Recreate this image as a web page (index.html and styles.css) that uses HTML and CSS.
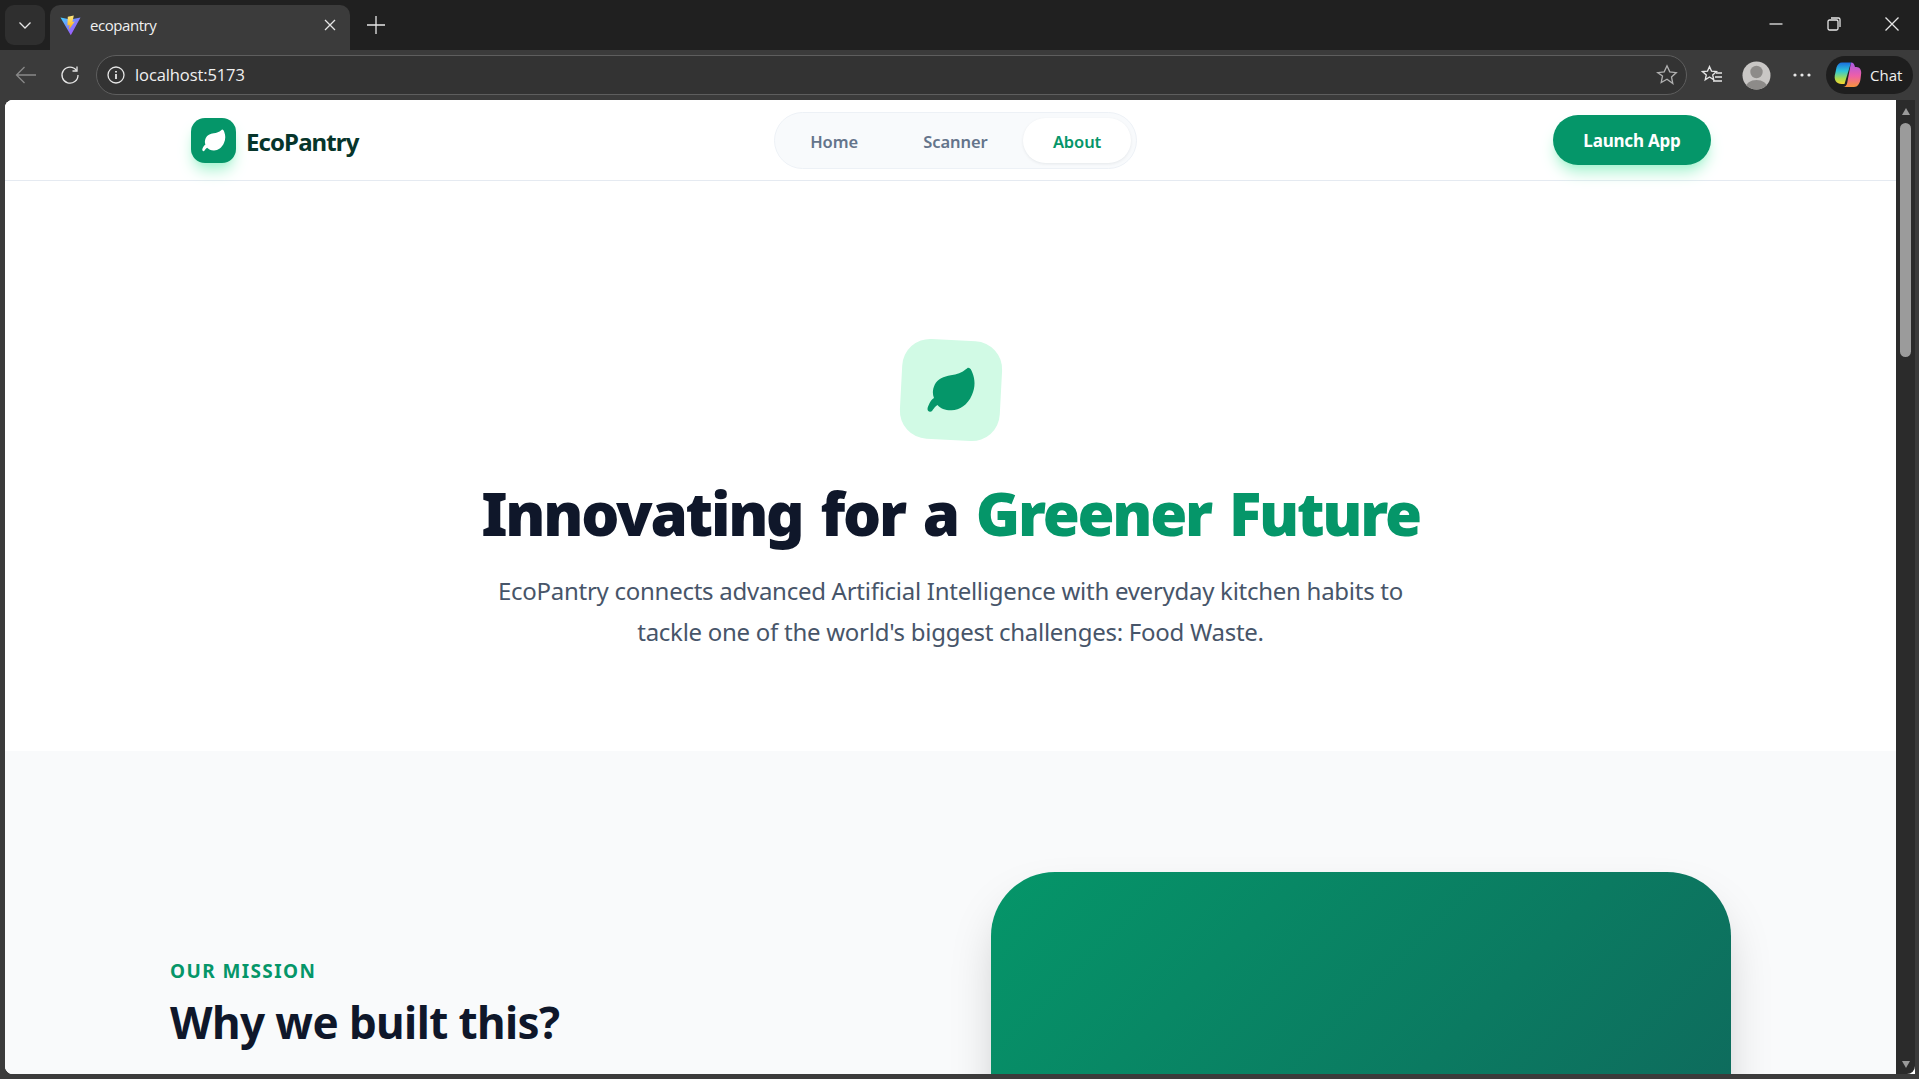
FILE: index.html
```html
<!DOCTYPE html>
<html lang="en">
<head>
<meta charset="utf-8">
<title>ecopantry</title>
<link rel="stylesheet" href="styles.css">
</head>
<body>
<div class="browser">
  <div class="tabstrip">
    <div class="tab-menu"><svg width="16" height="16" viewBox="0 0 16 16"><path d="M2.500 5.500 8 11l5.500-5.500" class="st"/></svg></div>
    <div class="tab">
      <svg class="favicon" width="21" height="21" viewBox="0 0 21 21">
        <defs>
          <linearGradient id="va" x1="0" y1="0" x2="1" y2="1"><stop offset="0" stop-color="#41d1ff"/><stop offset="1" stop-color="#bd34fe"/></linearGradient>
          <linearGradient id="vb" x1="0" y1="0" x2="0" y2="1"><stop offset="0" stop-color="#ffea83"/><stop offset="1" stop-color="#ffa800"/></linearGradient>
        </defs>
        <path d="M0.500 2.500 10.500 4.500 20.500 2.500 10.800 20.200Z" fill="url(#va)"/>
        <path d="M13.800 0.500 7.800 1.800 7.400 10.400 9.600 10 9 14.600 14.800 6.600 12.400 7Z" fill="url(#vb)"/>
      </svg>
      <span class="tab-title">ecopantry</span>
      <svg class="tab-close" width="12" height="12" viewBox="0 0 12 12"><path d="M1 1l10 10M11 1 1 11" class="st"/></svg>
    </div>
    <svg class="newtab" width="20" height="20" viewBox="0 0 20 20"><path d="M10 1v18M1 10h18" class="st"/></svg>
    <div class="window-controls">
      <svg width="14" height="14" viewBox="0 0 14 14"><path d="M0.500 7h13" class="st"/></svg>
      <svg width="14" height="14" viewBox="0 0 14 14"><rect x="1" y="3" width="10" height="10" rx="1.500" class="st"/><path d="M4 1h7.500A1.500 1.500 0 0 1 13 2.500V10" class="st"/></svg>
      <svg width="14" height="14" viewBox="0 0 14 14"><path d="M0.500 0.500l13 13M13.500 0.500l-13 13" class="st"/></svg>
    </div>
  </div>
  <div class="toolbar">
    <svg class="tool-back" width="22" height="18" viewBox="0 0 22 18"><path d="M21 9H1.500M9.500 1 1.500 9l8 8" class="st"/></svg>
    <svg class="tool-reload" width="20" height="20" viewBox="0 0 20 20"><path d="M16.500 5.500A8 8 0 1 0 18 10" class="st"/><path d="M17 1.500v4.500h-4.500" class="st"/></svg>
    <div class="omnibox">
      <svg width="18" height="18" viewBox="0 0 18 18"><circle cx="9" cy="9" r="8" class="st"/><path d="M9 8v5M9 5v1.500" class="st st-b"/></svg>
      <span class="url">localhost:5173</span>
      <svg class="omni-star" width="22" height="22" viewBox="0 0 22 22"><path d="M11 1.800l2.800 6 6.500.8-4.800 4.400 1.300 6.500L11 15.300l-5.800 3.200 1.300-6.500L1.700 8.600l6.500-.8z" class="st"/></svg>
    </div>
    <svg class="tool-fav" width="22" height="20" viewBox="0 0 22 20"><path d="M8.500 1.500l2 4.600 5 .5-3.800 3.300 1.100 5L8.500 12l-4.300 2.900 1.100-5L1.500 6.600l5-.5z" class="st"/><path d="M15 8h6M14 12h7M12 16h9" class="st"/></svg>
    <svg class="tool-avatar" width="29" height="29" viewBox="0 0 29 29"><defs><clipPath id="av"><circle cx="14.500" cy="14.500" r="14"/></clipPath></defs><circle cx="14.500" cy="14.500" r="14" fill="#c9c7c5"/><g clip-path="url(#av)" fill="#8d8b89"><circle cx="14.500" cy="11" r="6.200"/><ellipse cx="14.500" cy="27" rx="11" ry="8"/></g></svg>
    <svg class="tool-more" width="18" height="4" viewBox="0 0 18 4"><circle cx="2" cy="2" r="1.600" fill="#e8e8e8"/><circle cx="9" cy="2" r="1.600" fill="#e8e8e8"/><circle cx="16" cy="2" r="1.600" fill="#e8e8e8"/></svg>
    <div class="chat">
      <svg width="28" height="28" viewBox="0 0 28 28">
        <defs>
          <linearGradient id="ca" x1="0.300" y1="0" x2="0.300" y2="1"><stop offset="0" stop-color="#1a6fe0"/><stop offset=".4" stop-color="#2fc6d8"/><stop offset=".75" stop-color="#a8dc50"/><stop offset="1" stop-color="#f7d52e"/></linearGradient>
          <linearGradient id="cb" x1="0.500" y1="0" x2="0.500" y2="1"><stop offset="0" stop-color="#a85ae6"/><stop offset=".55" stop-color="#ee5fa8"/><stop offset="1" stop-color="#f7943c"/></linearGradient>
        </defs>
        <path d="M8 1.500h9L10.500 23H7.500C2.500 23 0 19 .8 14.500L2.500 6.500C3.200 3.500 5.500 1.500 8 1.500Z" fill="url(#ca)"/>
        <path d="M17 1.500c2.200 0 3.300 1.200 4 4.500h1.500c3 .3 5 2.500 4.700 6l-.7 6c-.6 4.500-3 8-6.500 8H9c2.200 0 3.500-1.500 4.200-4Z" fill="url(#cb)"/>
      </svg>
      <span>Chat</span>
    </div>
  </div>
  <div class="viewport">
    <div class="page">
      <header class="navbar">
        <div class="brand">
          <div class="brand-icon">
            <svg width="24" height="23" viewBox="140 142 140 130"><path class="leaf-w" d="M258 143C264 143 267 150 270 158C278 178 278 200 268 222C256 250 232 266 208 265C192 265 178 260 170 250C165 252 158 262 155 266C152 270 146 270 143 266C140 262 142 256 145 250C148 242 153 234 160 230C155 218 156 205 162 192C170 176 188 168 208 165C225 163 240 158 252 147C254 145 256 143 258 143Z"/></svg>
          </div>
          <span class="brand-name">EcoPantry</span>
        </div>
        <nav class="nav-pill">
          <a class="nav-link">Home</a>
          <a class="nav-link">Scanner</a>
          <a class="nav-link active">About</a>
        </nav>
        <button class="launch">Launch App</button>
      </header>
      <section class="hero">
        <div class="hero-icon">
          <svg class="hero-leaf" width="49" height="46" viewBox="140 142 140 130"><path class="leaf-g" d="M258 143C264 143 267 150 270 158C278 178 278 200 268 222C256 250 232 266 208 265C192 265 178 260 170 250C165 252 158 262 155 266C152 270 146 270 143 266C140 262 142 256 145 250C148 242 153 234 160 230C155 218 156 205 162 192C170 176 188 168 208 165C225 163 240 158 252 147C254 145 256 143 258 143Z"/></svg>
        </div>
        <h1 class="hero-title">Innovating for a <span class="green">Greener Future</span></h1>
        <p class="hero-sub">EcoPantry connects advanced Artificial Intelligence with everyday kitchen habits to tackle one of the world's biggest challenges: Food Waste.</p>
      </section>
      <section class="mission">
        <div class="mission-text">
          <div class="eyebrow">OUR MISSION</div>
          <h2 class="mission-title">Why we built this?</h2>
        </div>
        <div class="mission-card"></div>
      </section>
    </div>
    <div class="scrollbar">
      <span class="arrow up"></span>
      <span class="thumb"></span>
      <span class="arrow down"></span>
    </div>
  </div>
</div>
</body>
</html>
```
FILE: styles.css
```css
* { box-sizing: border-box; }
html, body { margin: 0; height: 100%; overflow: hidden; }
body { font-family: "Noto Sans", sans-serif; background: #3b3b3b; }
.st { fill: none; stroke: #e6e6e6; stroke-width: 1.300; }
.st-b { stroke-width: 1.800; }
.browser { width: 1919px; height: 1079px; display: flex; flex-direction: column; }

.tabstrip { height: 50px; flex: none; background: #202020; display: flex; align-items: center; padding-left: 5px; position: relative; }
.tab-menu { width: 40px; height: 40px; background: #2f2f2f; border-radius: 9px; display: flex; align-items: center; justify-content: center; }
.tab { width: 300px; height: 45px; margin-left: 5px; margin-top: 5px; background: #3b3b3b; border-radius: 10px 10px 0 0; display: flex; align-items: center; padding: 0 14px 5px 10px; color: #f0f0f0; font-size: 15px; font-family: "Open Sans", sans-serif; }
.favicon { flex: none; }
.tab-title { margin-left: 9px; flex: 1; letter-spacing: -0.45px; }
.newtab { margin-left: 16px; }
.window-controls { margin-left: auto; display: flex; gap: 44px; padding-right: 20px; margin-top: -3px; }

.toolbar { height: 50px; flex: none; background: #3b3b3b; display: flex; align-items: center; position: relative; }
.tool-back { margin-left: 15px; opacity: .45; }
.tool-reload { margin-left: 23px; }
.omnibox { width: 1591px; height: 40px; margin-left: 16px; border: 1.500px solid #5e5e5e; background: #333333; border-radius: 20px; display: flex; align-items: center; padding-left: 10px; padding-right: 8px; color: #f0f0f0; }
.url { margin-left: 10px; margin-top: -1px; font-family: "Open Sans", sans-serif; font-size: 16.500px; letter-spacing: -0.1px; }
.omni-star { margin-left: auto; opacity: .7; }
.tool-fav { margin-left: 14px; }
.tool-avatar { margin-left: 19px; }
.tool-more { margin-left: 22px; }
.chat { margin-left: 15px; width: 87px; height: 38px; background: #1e1e1e; border-radius: 19px; display: flex; align-items: center; padding-left: 8px; gap: 8px; color: #f0f0f0; font-size: 15px; font-family: "Open Sans", sans-serif; }

.viewport { width: 1910px; height: 974px; margin-left: 5px; flex: none; display: flex; border-radius: 8px 0 0 8px; overflow: hidden; background: #fff; }
.page { width: 1891px; flex: none; height: 974px; overflow: hidden; background: #fff; }
.scrollbar { width: 19px; flex: none; background: #2b2b2b; display: flex; flex-direction: column; align-items: center; padding: 8px 0 6px; border-radius: 0 0 8px 0; }
.arrow { width: 0; height: 0; border-left: 4.500px solid transparent; border-right: 4.500px solid transparent; }
.arrow.up { border-bottom: 7px solid #9b9b9b; }
.arrow.down { border-top: 7px solid #9b9b9b; margin-top: auto; }
.thumb { width: 11px; height: 234px; margin-top: 8px; background: #9b9b9b; border-radius: 6px; }

.navbar { height: 81px; display: flex; align-items: center; justify-content: space-between; padding: 0 185px 0 186px; border-bottom: 1px solid #e5eaf1; background: #fff; position: relative; }
.brand { display: flex; align-items: center; gap: 10px; }
.brand-icon { width: 45px; height: 45px; background: #059669; border-radius: 14px; display: flex; align-items: center; justify-content: center; box-shadow: 0 10px 15px -3px #a7f3d0, 0 4px 6px -4px #a7f3d0; }
.leaf-w { fill: #fff; }
.leaf-g { fill: #059669; }
.brand-name { font-size: 24px; font-weight: 700; color: #06352b; letter-spacing: -0.9px; padding-top: 2px; }
.nav-pill { width: 363px; height: 57px; background: #f8fafc; border: 1px solid #edf1f6; border-radius: 28.500px; display: flex; align-items: center; padding: 5px; justify-content: space-between; }
.nav-link { height: 45px; display: flex; align-items: center; justify-content: center; padding: 2px 30px 0; border-radius: 23px; font-size: 16.500px; font-weight: 600; color: #64748b; letter-spacing: -0.1px; }
.nav-link.active { background: #fff; color: #059669; box-shadow: 0 1px 3px rgba(15, 23, 42, .08); }
.launch { width: 158px; height: 50px; border: 0; border-radius: 25px; padding-top: 2px; background: #059669; color: #fff; font: 700 17px "Noto Sans", sans-serif; letter-spacing: -0.2px; box-shadow: 0 10px 15px -3px #a7f3d0, 0 4px 6px -4px #a7f3d0; }

.hero { height: 570px; background: #fff; display: flex; flex-direction: column; align-items: center; padding-top: 159px; }
.hero-icon { width: 100px; height: 100px; background: #d1fae5; border-radius: 28px; transform: rotate(3deg); display: flex; align-items: center; justify-content: center; }
.hero-leaf { transform: rotate(-3deg); }
.hero-title { margin: 38px 0 0; font-size: 60px; line-height: 70px; font-weight: 900; color: #0f172a; letter-spacing: -2.250px; word-spacing: 4.600px; white-space: nowrap; }
.green { color: #059669; }
.hero-sub { width: 930px; margin: 22px 0 0; font-size: 24px; line-height: 41px; color: #475569; text-align: center; letter-spacing: -0.27px; }

.mission { height: 323px; background: #f9fafb; display: flex; justify-content: space-between; padding: 121px 165px 0 165px; }
.mission-text { padding-top: 85px; }
.eyebrow { font-size: 19px; font-weight: 700; letter-spacing: 1.400px; line-height: 28px; color: #059669; }
.mission-title { margin: 9px 0 0; font-size: 44px; line-height: 56px; font-weight: 700; color: #0f172a; letter-spacing: -0.6px; }
.mission-card { width: 740px; height: 520px; border-radius: 64px; background: linear-gradient(135deg, #059669, #115e59); box-shadow: 0 25px 50px -12px rgba(0, 0, 0, .25); }
```
